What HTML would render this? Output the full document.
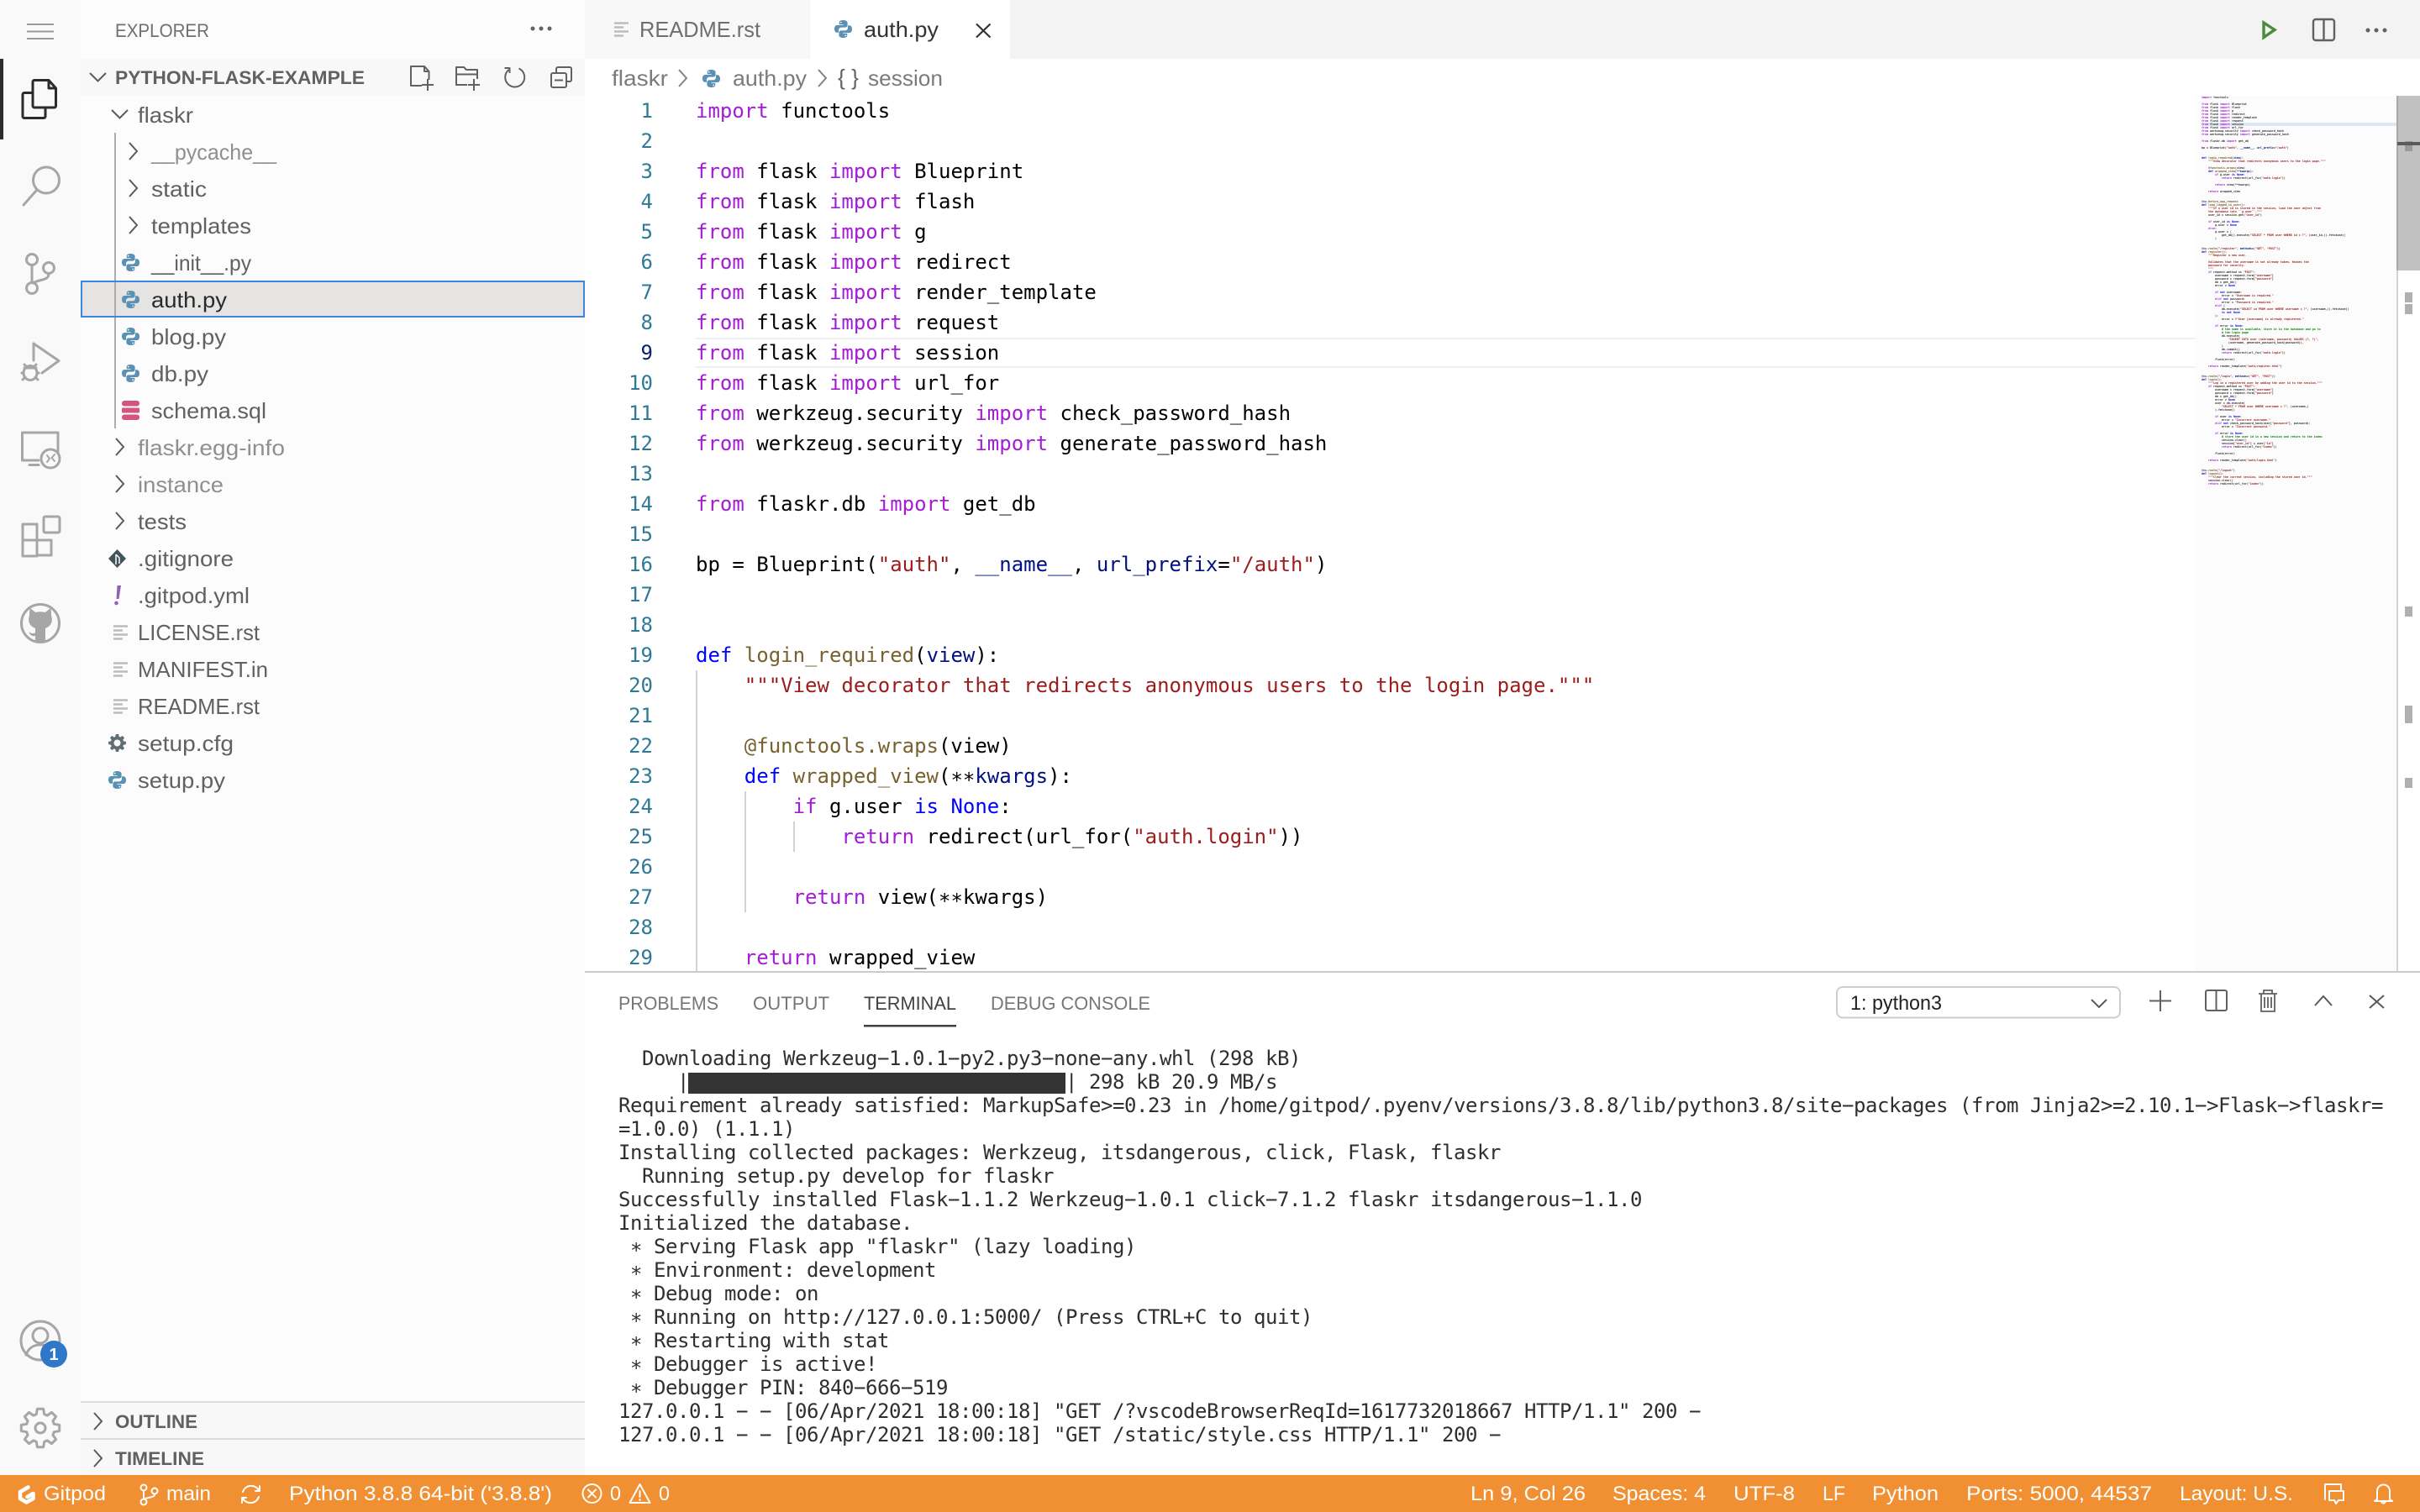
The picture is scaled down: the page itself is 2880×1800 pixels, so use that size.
<!DOCTYPE html>
<html lang="en">
<head>
<meta charset="utf-8">
<title>auth.py - python-flask-example - Gitpod Code</title>
<style>
html,body{margin:0;padding:0;width:2880px;height:1800px;overflow:hidden;background:#fff}
svg{display:block}
text{white-space:pre}
.u{font-family:"Liberation Sans",sans-serif;font-size:26px;fill:#616161}
.d{fill:#8f8f8f}
.h{font-family:"Liberation Sans",sans-serif;font-size:22px;fill:#6f6f6f}
.hb{font-family:"Liberation Sans",sans-serif;font-size:22px;font-weight:700;fill:#616161}
.st{font-family:"Liberation Sans",sans-serif;font-size:24px;fill:#fff}
.m{font-family:"DejaVu Sans Mono","Liberation Mono",monospace;font-size:24px;fill:#000}
.ln{font-family:"DejaVu Sans Mono","Liberation Mono",monospace;font-size:24px;fill:#2e7a96;text-anchor:end}
.t{font-family:"DejaVu Sans Mono","Liberation Mono",monospace;font-size:24px;fill:#2f2f2f;letter-spacing:-.449px}
.mm{font-family:"DejaVu Sans Mono","Liberation Mono",monospace;font-size:3.32px;font-weight:700;fill:#333}
.k{fill:#a41cd6}.b{fill:#0000ff}.f{fill:#78612e}.s{fill:#9c1c1c}.p{fill:#001080}.c{fill:#008000}
.ai{fill:none;stroke:#a6a6a6;stroke-width:3;stroke-linecap:round;stroke-linejoin:round}
.ic{fill:none;stroke:#616161;stroke-width:2;stroke-linejoin:round}
.ch{fill:none;stroke:#5a5a5a;stroke-width:2}
.w{fill:none;stroke:#fff;stroke-width:2;stroke-linejoin:round;stroke-linecap:round}
</style>
</head>
<body>
<svg xmlns="http://www.w3.org/2000/svg" width="2880" height="1800" viewBox="0 0 2880 1800">
<defs>
<symbol id="py" viewBox="0 0 21 21">
<g fill="#5b91b4">
<path fill-rule="evenodd" d="M10.4 0C6.5 0 5.7 1.5 5.7 3V5.2H10.6V6H3.2C1.3 6 0 7.7 0 10.4 0 13 1.2 14.8 3 14.8H5V12C5 10 6.6 8.6 8.4 8.6H13C14.5 8.6 15.6 7.4 15.6 6V3C15.6 1.2 13.6 0 10.4 0ZM7.7 1.7a.9.9 0 1 1 0 1.8.9.9 0 1 1 0-1.8Z"/>
<path fill-rule="evenodd" transform="rotate(180 10.5 10.5)" d="M10.4 0C6.5 0 5.7 1.5 5.7 3V5.2H10.6V6H3.2C1.3 6 0 7.7 0 10.4 0 13 1.2 14.8 3 14.8H5V12C5 10 6.6 8.6 8.4 8.6H13C14.5 8.6 15.6 7.4 15.6 6V3C15.6 1.2 13.6 0 10.4 0ZM7.7 1.7a.9.9 0 1 1 0 1.8.9.9 0 1 1 0-1.8Z"/>
</g>
</symbol>
<symbol id="fl" viewBox="0 0 17 18">
<path d="M0 1.5H17M0 6.5H11M0 11.5H17M0 16.5H11" stroke="#bcbcbc" stroke-width="2.4" fill="none"/>
</symbol>
<path id="gear" d="M-4.69-16.34L-3.6-22.72 3.6-22.72 4.69-16.34 8.24-14.87 13.52-18.61 18.61-13.52 14.87-8.24 16.34-4.69 22.72-3.6 22.72 3.6 16.34 4.69 14.87 8.24 18.61 13.52 13.52 18.61 8.24 14.87 4.69 16.34 3.6 22.72-3.6 22.72-4.69 16.34-8.24 14.87-13.52 18.61-18.61 13.52-14.87 8.24-16.34 4.69-22.72 3.6-22.72-3.6-16.34-4.69-14.87-8.24-18.61-13.52-13.52-18.61-8.24-14.87Z"/>
<path id="cr" d="M0 0L9 10 0 20" class="ch"/>
<path id="cd" d="M0 0L9.5 9.5 19 0" class="ch"/>
</defs>

<!-- backgrounds -->
<rect width="2880" height="1800" fill="#fff"/>
<rect x="0" y="0" width="96" height="1756" fill="#f9f9f9"/>
<rect x="96" y="0" width="600" height="1756" fill="#fcfcfc"/>
<rect x="96" y="70" width="600" height="44" fill="#f8f8f8"/>
<rect x="696" y="0" width="2184" height="70" fill="#f3f3f3"/>
<rect x="696" y="0" width="267" height="70" fill="#f8f8f8"/>
<rect x="964" y="0" width="238" height="70" fill="#fff"/>

<!-- activity bar -->
<path d="M32 29H64M32 37.5H64M32 46H64" stroke="#9a9a9a" stroke-width="2" fill="none"/>
<rect x="0" y="70" width="4" height="96" fill="#2c2c2c"/>
<g fill="none" stroke="#2b2b2b" stroke-width="3" stroke-linejoin="round">
<path d="M41 95.5H58L66.5 105V126a2 2 0 0 1-2 2H41a2 2 0 0 1-2-2V97.5a2 2 0 0 1 2-2Z"/>
<path d="M58 95.5V105H66.5"/>
<path d="M39 110.5H29a2 2 0 0 0-2 2V138.5a2 2 0 0 0 2 2H52a2 2 0 0 0 2-2V128"/>
</g>
<g class="ai">
<circle cx="55" cy="214.5" r="15.5"/><path d="M44 226L28 244"/>
<circle cx="38" cy="309" r="6.5"/><circle cx="58" cy="319" r="6.5"/><circle cx="38" cy="343" r="6.5"/>
<path d="M38 316V336M58 326C58 334 48 332 39 337"/>
<path d="M40 409V429M40 409L70 429.5 50 444"/>
<ellipse cx="36" cy="444" rx="8" ry="8.5"/>
<path d="M29 434L32 437M43 434L40 437M26 444H28M44 444H46M27 452L30 449M45 452L42 449M29 438H43"/>
<path d="M69 539V515H26.5V548H46M35 553.5H46"/>
<circle cx="60" cy="546" r="11"/>
<path d="M56 542L59 546 56 550M65 541L61.500 545 65 549" stroke-width="2"/>
<path d="M27 624H44V662H27ZM27 643H61V661H44"/>
<rect x="52" y="615" width="19" height="19" rx="2"/>
<circle cx="48" cy="742" r="22.500"/>
<circle cx="48" cy="1596" r="23"/>
<circle cx="48" cy="1590" r="9"/>
<path d="M31 1613C34 1604 41 1601 48 1601S62 1604 65 1613"/>
<use href="#gear" transform="translate(48 1700)"/>
<circle cx="48" cy="1700" r="6"/>
</g>
<path fill="#a6a6a6" d="M36 724L42 729C46 728 50 728 54 729L60 724C61 727 61 730 61 733 63 738 62 745 54 748V764H42V757C38 758 36 756 34 752 37 754 39 755 42 753V748C34 745 33 738 35 733 35 730 35 727 36 724Z"/>
<circle cx="64" cy="1612" r="16" fill="#2f77c9"/>
<text x="64" y="1619" text-anchor="middle" style="font:700 20px 'Liberation Sans',sans-serif;fill:#fff">1</text>

<!-- sidebar header -->
<text class="h" x="137" y="44" textLength="112" lengthAdjust="spacingAndGlyphs">EXPLORER</text>
<g fill="#616161"><circle cx="634" cy="34" r="2.500"/><circle cx="644" cy="34" r="2.500"/><circle cx="654" cy="34" r="2.500"/></g>
<use href="#cd" x="107" y="87"/>
<text class="hb" x="137" y="100" textLength="297" lengthAdjust="spacingAndGlyphs">PYTHON-FLASK-EXAMPLE</text>
<g class="ic">
<path d="M502 102H489V79H505L510.500 85V95M505 79V85H510.500"/><path d="M509 94V108M502 101H516"/>
<path d="M556 101H543V80H552L555 83H568V94M543 88.500H568"/><path d="M564 94V108M557 101H571"/>
<path d="M605.500 83A11.500 11.500 0 1 0 617.500 81.500M600.500 81H606.500V87"/>
<path d="M662 87V82a2 2 0 0 1 2-2H678a2 2 0 0 1 2 2V95a2 2 0 0 1-2 2H674"/>
<rect x="656" y="87" width="18" height="17" rx="2"/><path d="M660 95.500H670"/>
</g>

<!-- tree -->
<use href="#cd" x="133" y="131"/>
<text class="u" x="164" y="146" textLength="66" lengthAdjust="spacingAndGlyphs">flaskr</text>
<rect x="136" y="158" width="2" height="352" fill="#adadad"/>
<use href="#cr" x="154" y="170"/>
<text class="u d" x="180" y="190" textLength="149" lengthAdjust="spacingAndGlyphs">__pycache__</text>
<use href="#cr" x="154" y="214"/>
<text class="u" x="180" y="234" textLength="66" lengthAdjust="spacingAndGlyphs">static</text>
<use href="#cr" x="154" y="258"/>
<text class="u" x="180" y="278" textLength="119" lengthAdjust="spacingAndGlyphs">templates</text>
<use href="#py" x="145" y="302" width="21" height="21"/>
<text class="u" x="180" y="322" textLength="119" lengthAdjust="spacingAndGlyphs">__init__.py</text>
<rect x="97" y="335" width="598" height="42" fill="#e5e4e3" stroke="#3b87e5" stroke-width="2"/>
<rect x="136" y="336" width="2" height="40" fill="#adadad"/>
<use href="#py" x="145" y="346" width="21" height="21"/>
<text class="u" x="180" y="366" textLength="90" lengthAdjust="spacingAndGlyphs" style="fill:#2a2a2a">auth.py</text>
<use href="#py" x="145" y="390" width="21" height="21"/>
<text class="u" x="180" y="410" textLength="89" lengthAdjust="spacingAndGlyphs">blog.py</text>
<use href="#py" x="145" y="434" width="21" height="21"/>
<text class="u" x="180" y="454" textLength="68" lengthAdjust="spacingAndGlyphs">db.py</text>
<g fill="#d1557c"><rect x="145" y="477" width="21" height="6.500" rx="3"/><rect x="145" y="485.500" width="21" height="6" rx="1"/><rect x="145" y="493.500" width="21" height="6.500" rx="3"/></g>
<text class="u" x="180" y="498" textLength="137" lengthAdjust="spacingAndGlyphs">schema.sql</text>
<use href="#cr" x="138" y="522"/>
<text class="u d" x="164" y="542" textLength="175" lengthAdjust="spacingAndGlyphs">flaskr.egg-info</text>
<use href="#cr" x="138" y="566"/>
<text class="u d" x="164" y="586" textLength="102" lengthAdjust="spacingAndGlyphs">instance</text>
<use href="#cr" x="138" y="610"/>
<text class="u" x="164" y="630" textLength="58" lengthAdjust="spacingAndGlyphs">tests</text>
<path d="M139.500 654L150 665 139.500 676 129 665Z" fill="#41535b"/>
<path d="M138 660L142 664V671M138 660V672" stroke="#fcfcfc" stroke-width="1.500" fill="none"/>
<text class="u" x="164" y="674" textLength="114" lengthAdjust="spacingAndGlyphs">.gitignore</text>
<path d="M139.500 697H144L141.500 713H138.500Z" fill="#8f62b5"/><circle cx="138.500" cy="718" r="2.300" fill="#8f62b5"/>
<text class="u" x="164" y="718" textLength="133" lengthAdjust="spacingAndGlyphs">.gitpod.yml</text>
<use href="#fl" x="135" y="744" width="17" height="18"/>
<text class="u" x="164" y="762" textLength="145" lengthAdjust="spacingAndGlyphs">LICENSE.rst</text>
<use href="#fl" x="135" y="788" width="17" height="18"/>
<text class="u" x="164" y="806" textLength="155" lengthAdjust="spacingAndGlyphs">MANIFEST.in</text>
<use href="#fl" x="135" y="832" width="17" height="18"/>
<text class="u" x="164" y="850" textLength="145" lengthAdjust="spacingAndGlyphs">README.rst</text>
<use href="#gear" transform="translate(139.500 884.500) scale(.46)" fill="#5f6d76"/>
<circle cx="139.500" cy="884.500" r="4" fill="#fcfcfc"/>
<text class="u" x="164" y="894" textLength="114" lengthAdjust="spacingAndGlyphs">setup.cfg</text>
<use href="#py" x="129" y="918" width="21" height="21"/>
<text class="u" x="164" y="938" textLength="104" lengthAdjust="spacingAndGlyphs">setup.py</text>

<!-- outline / timeline -->
<rect x="96" y="1670" width="600" height="86" fill="#f8f8f8"/>
<rect x="96" y="1668" width="600" height="2" fill="#dcdcdc"/>
<rect x="96" y="1712" width="600" height="2" fill="#dcdcdc"/>
<use href="#cr" x="112" y="1682"/>
<text class="hb" x="137" y="1700" textLength="98" lengthAdjust="spacingAndGlyphs">OUTLINE</text>
<use href="#cr" x="112" y="1726"/>
<text class="hb" x="137" y="1744" textLength="106" lengthAdjust="spacingAndGlyphs">TIMELINE</text>

<!-- tabs -->
<use href="#fl" x="731" y="26" width="17" height="18"/>
<text class="u" x="761" y="44" textLength="144" lengthAdjust="spacingAndGlyphs" style="fill:#6f6f6f">README.rst</text>
<use href="#py" x="993" y="24" width="21" height="21"/>
<text class="u" x="1028" y="44" textLength="89" lengthAdjust="spacingAndGlyphs" style="fill:#333">auth.py</text>
<path d="M1162 28.500L1178.500 44.500M1178.500 28.500L1162 44.500" stroke="#333" stroke-width="2.200" fill="none"/>
<path d="M2694 27V44.500L2707 35.500Z" fill="none" stroke="#4b8b3b" stroke-width="3.400"/>
<rect x="2753" y="23" width="25" height="25" rx="3" fill="none" stroke="#616161" stroke-width="2.400"/>
<path d="M2765.500 23V48" stroke="#616161" stroke-width="2.400"/>
<g fill="#616161"><circle cx="2818" cy="36" r="2.500"/><circle cx="2828" cy="36" r="2.500"/><circle cx="2838" cy="36" r="2.500"/></g>

<!-- breadcrumbs -->
<text class="u" x="728" y="102" textLength="67" lengthAdjust="spacingAndGlyphs" style="fill:#7b7b7b">flaskr</text>
<use href="#cr" x="808" y="83" style="opacity:.75"/>
<use href="#py" x="836" y="83" width="21" height="21"/>
<text class="u" x="872" y="102" textLength="88" lengthAdjust="spacingAndGlyphs" style="fill:#7b7b7b">auth.py</text>
<use href="#cr" x="974" y="83" style="opacity:.75"/>
<text class="u" x="997" y="101" textLength="25" lengthAdjust="spacingAndGlyphs" style="fill:#616161">{ }</text>
<text class="u" x="1033" y="102" textLength="89" lengthAdjust="spacingAndGlyphs" style="fill:#7b7b7b">session</text>

<!-- current line -->
<rect x="828" y="402" width="1784" height="2" fill="#efefef"/>
<rect x="828" y="436" width="1784" height="2" fill="#efefef"/>

<!-- minimap + scrollbar -->
<rect x="2612" y="114" width="240" height="1043" fill="#fcfcfc"/>
<rect x="2620" y="146" width="232" height="4" fill="#dbe7f7"/>
<rect x="2852" y="114" width="2" height="1043" fill="#d3d3d3"/>
<rect x="2854" y="114" width="26" height="208" fill="#c1c1c1"/>
<rect x="2852" y="114" width="2" height="208" fill="#a9a9a9"/>
<rect x="2862" y="168" width="9" height="12" fill="#999"/>
<rect x="2853" y="169" width="27" height="4" fill="#5a5a5a"/>
<g fill="#b0b0b0">
<rect x="2862" y="348" width="9" height="12"/><rect x="2862" y="362" width="9" height="12"/>
<rect x="2862" y="722" width="9" height="12"/><rect x="2862" y="840" width="9" height="21"/><rect x="2862" y="926" width="9" height="12"/>
</g>

<!-- indent guides -->
<g fill="#d3d3d3">
<rect x="828" y="798" width="2" height="359"/>
<rect x="886" y="942" width="2" height="144"/>
<rect x="944" y="978" width="2" height="36"/>
</g>

<!-- line numbers -->
<text class="ln" x="777" y="140">1</text>
<text class="ln" x="777" y="176">2</text>
<text class="ln" x="777" y="212">3</text>
<text class="ln" x="777" y="248">4</text>
<text class="ln" x="777" y="284">5</text>
<text class="ln" x="777" y="320">6</text>
<text class="ln" x="777" y="356">7</text>
<text class="ln" x="777" y="392">8</text>
<text class="ln" x="777" y="428" style="fill:#0b216f">9</text>
<text class="ln" x="777" y="464">10</text>
<text class="ln" x="777" y="500">11</text>
<text class="ln" x="777" y="536">12</text>
<text class="ln" x="777" y="572">13</text>
<text class="ln" x="777" y="608">14</text>
<text class="ln" x="777" y="644">15</text>
<text class="ln" x="777" y="680">16</text>
<text class="ln" x="777" y="716">17</text>
<text class="ln" x="777" y="752">18</text>
<text class="ln" x="777" y="788">19</text>
<text class="ln" x="777" y="824">20</text>
<text class="ln" x="777" y="860">21</text>
<text class="ln" x="777" y="896">22</text>
<text class="ln" x="777" y="932">23</text>
<text class="ln" x="777" y="968">24</text>
<text class="ln" x="777" y="1004">25</text>
<text class="ln" x="777" y="1040">26</text>
<text class="ln" x="777" y="1076">27</text>
<text class="ln" x="777" y="1112">28</text>
<text class="ln" x="777" y="1148">29</text>

<!-- code -->
<text class="m" x="828" y="140"><tspan class="k">import</tspan> functools</text>
<text class="m" x="828" y="212"><tspan class="k">from</tspan> flask <tspan class="k">import</tspan> Blueprint</text>
<text class="m" x="828" y="248"><tspan class="k">from</tspan> flask <tspan class="k">import</tspan> flash</text>
<text class="m" x="828" y="284"><tspan class="k">from</tspan> flask <tspan class="k">import</tspan> g</text>
<text class="m" x="828" y="320"><tspan class="k">from</tspan> flask <tspan class="k">import</tspan> redirect</text>
<text class="m" x="828" y="356"><tspan class="k">from</tspan> flask <tspan class="k">import</tspan> render_template</text>
<text class="m" x="828" y="392"><tspan class="k">from</tspan> flask <tspan class="k">import</tspan> request</text>
<text class="m" x="828" y="428"><tspan class="k">from</tspan> flask <tspan class="k">import</tspan> session</text>
<text class="m" x="828" y="464"><tspan class="k">from</tspan> flask <tspan class="k">import</tspan> url_for</text>
<text class="m" x="828" y="500"><tspan class="k">from</tspan> werkzeug.security <tspan class="k">import</tspan> check_password_hash</text>
<text class="m" x="828" y="536"><tspan class="k">from</tspan> werkzeug.security <tspan class="k">import</tspan> generate_password_hash</text>
<text class="m" x="828" y="608"><tspan class="k">from</tspan> flaskr.db <tspan class="k">import</tspan> get_db</text>
<text class="m" x="828" y="680">bp = Blueprint(<tspan class="s">"auth"</tspan>, <tspan class="p">__name__</tspan>, <tspan class="p">url_prefix</tspan>=<tspan class="s">"/auth"</tspan>)</text>
<text class="m" x="828" y="788"><tspan class="b">def</tspan> <tspan class="f">login_required</tspan>(<tspan class="p">view</tspan>):</text>
<text class="m" x="828" y="824">    <tspan class="s">"""View decorator that redirects anonymous users to the login page."""</tspan></text>
<text class="m" x="828" y="896">    <tspan class="f">@functools.wraps</tspan>(view)</text>
<text class="m" x="828" y="932">    <tspan class="b">def</tspan> <tspan class="f">wrapped_view</tspan>(∗∗<tspan class="p">kwargs</tspan>):</text>
<text class="m" x="828" y="968">        <tspan class="k">if</tspan> g.user <tspan class="b">is</tspan> <tspan class="b">None</tspan>:</text>
<text class="m" x="828" y="1004">            <tspan class="k">return</tspan> redirect(url_for(<tspan class="s">"auth.login"</tspan>))</text>
<text class="m" x="828" y="1076">        <tspan class="k">return</tspan> view(∗∗kwargs)</text>
<text class="m" x="828" y="1148">    <tspan class="k">return</tspan> wrapped_view</text>

<!-- minimap text -->
<g transform="translate(0 -1)">
<text class="mm" x="2620" y="118"><tspan class="k">import</tspan> functools</text>
<text class="mm" x="2620" y="126"><tspan class="k">from</tspan> flask <tspan class="k">import</tspan> Blueprint</text>
<text class="mm" x="2620" y="130"><tspan class="k">from</tspan> flask <tspan class="k">import</tspan> flash</text>
<text class="mm" x="2620" y="134"><tspan class="k">from</tspan> flask <tspan class="k">import</tspan> g</text>
<text class="mm" x="2620" y="138"><tspan class="k">from</tspan> flask <tspan class="k">import</tspan> redirect</text>
<text class="mm" x="2620" y="142"><tspan class="k">from</tspan> flask <tspan class="k">import</tspan> render_template</text>
<text class="mm" x="2620" y="146"><tspan class="k">from</tspan> flask <tspan class="k">import</tspan> request</text>
<text class="mm" x="2620" y="150"><tspan class="k">from</tspan> flask <tspan class="k">import</tspan> session</text>
<text class="mm" x="2620" y="154"><tspan class="k">from</tspan> flask <tspan class="k">import</tspan> url_for</text>
<text class="mm" x="2620" y="158"><tspan class="k">from</tspan> werkzeug.security <tspan class="k">import</tspan> check_password_hash</text>
<text class="mm" x="2620" y="162"><tspan class="k">from</tspan> werkzeug.security <tspan class="k">import</tspan> generate_password_hash</text>
<text class="mm" x="2620" y="170"><tspan class="k">from</tspan> flaskr.db <tspan class="k">import</tspan> get_db</text>
<text class="mm" x="2620" y="178">bp = Blueprint(<tspan class="s">"auth"</tspan>, <tspan class="p">__name__</tspan>, <tspan class="p">url_prefix</tspan>=<tspan class="s">"/auth"</tspan>)</text>
<text class="mm" x="2620" y="190"><tspan class="b">def</tspan> <tspan class="f">login_required</tspan>(<tspan class="p">view</tspan>):</text>
<text class="mm" x="2620" y="194">    <tspan class="s">"""View decorator that redirects anonymous users to the login page."""</tspan></text>
<text class="mm" x="2620" y="202">    <tspan class="f">@functools.wraps</tspan>(view)</text>
<text class="mm" x="2620" y="206">    <tspan class="b">def</tspan> <tspan class="f">wrapped_view</tspan>(**<tspan class="p">kwargs</tspan>):</text>
<text class="mm" x="2620" y="210">        <tspan class="k">if</tspan> g.user <tspan class="b">is</tspan> <tspan class="b">None</tspan>:</text>
<text class="mm" x="2620" y="214">            <tspan class="k">return</tspan> redirect(url_for(<tspan class="s">"auth.login"</tspan>))</text>
<text class="mm" x="2620" y="222">        <tspan class="k">return</tspan> view(**kwargs)</text>
<text class="mm" x="2620" y="230">    <tspan class="k">return</tspan> wrapped_view</text>
<text class="mm" x="2620" y="242"><tspan class="f">@bp.before_app_request</tspan></text>
<text class="mm" x="2620" y="246"><tspan class="b">def</tspan> <tspan class="f">load_logged_in_user</tspan>():</text>
<text class="mm" x="2620" y="250">    <tspan class="s">"""If a user id is stored in the session, load the user object from</tspan></text>
<text class="mm" x="2620" y="254">    <tspan class="s">the database into ``g.user``."""</tspan></text>
<text class="mm" x="2620" y="258">    user_id = session.get(<tspan class="s">"user_id"</tspan>)</text>
<text class="mm" x="2620" y="266">    <tspan class="k">if</tspan> user_id <tspan class="b">is</tspan> <tspan class="b">None</tspan>:</text>
<text class="mm" x="2620" y="270">        g.user = <tspan class="b">None</tspan></text>
<text class="mm" x="2620" y="274">    <tspan class="k">else</tspan>:</text>
<text class="mm" x="2620" y="278">        g.user = (</text>
<text class="mm" x="2620" y="282">            get_db().execute(<tspan class="s">"SELECT * FROM user WHERE id = ?"</tspan>, (user_id,)).fetchone()</text>
<text class="mm" x="2620" y="286">        )</text>
<text class="mm" x="2620" y="298"><tspan class="f">@bp.route</tspan>(<tspan class="s">"/register"</tspan>, <tspan class="p">methods</tspan>=(<tspan class="s">"GET"</tspan>, <tspan class="s">"POST"</tspan>))</text>
<text class="mm" x="2620" y="302"><tspan class="b">def</tspan> <tspan class="f">register</tspan>():</text>
<text class="mm" x="2620" y="306">    <tspan class="s">"""Register a new user.</tspan></text>
<text class="mm" x="2620" y="314">    <tspan class="s">Validates that the username is not already taken. Hashes the</tspan></text>
<text class="mm" x="2620" y="318">    <tspan class="s">password for security.</tspan></text>
<text class="mm" x="2620" y="322">    <tspan class="s">"""</tspan></text>
<text class="mm" x="2620" y="326">    <tspan class="k">if</tspan> request.method == <tspan class="s">"POST"</tspan>:</text>
<text class="mm" x="2620" y="330">        username = request.form[<tspan class="s">"username"</tspan>]</text>
<text class="mm" x="2620" y="334">        password = request.form[<tspan class="s">"password"</tspan>]</text>
<text class="mm" x="2620" y="338">        db = get_db()</text>
<text class="mm" x="2620" y="342">        error = <tspan class="b">None</tspan></text>
<text class="mm" x="2620" y="350">        <tspan class="k">if</tspan> <tspan class="b">not</tspan> username:</text>
<text class="mm" x="2620" y="354">            error = <tspan class="s">"Username is required."</tspan></text>
<text class="mm" x="2620" y="358">        <tspan class="k">elif</tspan> <tspan class="b">not</tspan> password:</text>
<text class="mm" x="2620" y="362">            error = <tspan class="s">"Password is required."</tspan></text>
<text class="mm" x="2620" y="366">        <tspan class="k">elif</tspan> (</text>
<text class="mm" x="2620" y="370">            db.execute(<tspan class="s">"SELECT id FROM user WHERE username = ?"</tspan>, (username,)).fetchone()</text>
<text class="mm" x="2620" y="374">            <tspan class="b">is not None</tspan></text>
<text class="mm" x="2620" y="378">        ):</text>
<text class="mm" x="2620" y="382">            error = <tspan class="s">f"User {username} is already registered."</tspan></text>
<text class="mm" x="2620" y="390">        <tspan class="k">if</tspan> error <tspan class="b">is</tspan> <tspan class="b">None</tspan>:</text>
<text class="mm" x="2620" y="394">            <tspan class="c"># the name is available, store it in the database and go to</tspan></text>
<text class="mm" x="2620" y="398">            <tspan class="c"># the login page</tspan></text>
<text class="mm" x="2620" y="402">            db.execute(</text>
<text class="mm" x="2620" y="406">                <tspan class="s">"INSERT INTO user (username, password) VALUES (?, ?)"</tspan>,</text>
<text class="mm" x="2620" y="410">                (username, generate_password_hash(password)),</text>
<text class="mm" x="2620" y="414">            )</text>
<text class="mm" x="2620" y="418">            db.commit()</text>
<text class="mm" x="2620" y="422">            <tspan class="k">return</tspan> redirect(url_for(<tspan class="s">"auth.login"</tspan>))</text>
<text class="mm" x="2620" y="430">        flash(error)</text>
<text class="mm" x="2620" y="438">    <tspan class="k">return</tspan> render_template(<tspan class="s">"auth/register.html"</tspan>)</text>
<text class="mm" x="2620" y="450"><tspan class="f">@bp.route</tspan>(<tspan class="s">"/login"</tspan>, <tspan class="p">methods</tspan>=(<tspan class="s">"GET"</tspan>, <tspan class="s">"POST"</tspan>))</text>
<text class="mm" x="2620" y="454"><tspan class="b">def</tspan> <tspan class="f">login</tspan>():</text>
<text class="mm" x="2620" y="458">    <tspan class="s">"""Log in a registered user by adding the user id to the session."""</tspan></text>
<text class="mm" x="2620" y="462">    <tspan class="k">if</tspan> request.method == <tspan class="s">"POST"</tspan>:</text>
<text class="mm" x="2620" y="466">        username = request.form[<tspan class="s">"username"</tspan>]</text>
<text class="mm" x="2620" y="470">        password = request.form[<tspan class="s">"password"</tspan>]</text>
<text class="mm" x="2620" y="474">        db = get_db()</text>
<text class="mm" x="2620" y="478">        error = <tspan class="b">None</tspan></text>
<text class="mm" x="2620" y="482">        user = db.execute(</text>
<text class="mm" x="2620" y="486">            <tspan class="s">"SELECT * FROM user WHERE username = ?"</tspan>, (username,)</text>
<text class="mm" x="2620" y="490">        ).fetchone()</text>
<text class="mm" x="2620" y="498">        <tspan class="k">if</tspan> user <tspan class="b">is</tspan> <tspan class="b">None</tspan>:</text>
<text class="mm" x="2620" y="502">            error = <tspan class="s">"Incorrect username."</tspan></text>
<text class="mm" x="2620" y="506">        <tspan class="k">elif</tspan> <tspan class="b">not</tspan> check_password_hash(user[<tspan class="s">"password"</tspan>], password):</text>
<text class="mm" x="2620" y="510">            error = <tspan class="s">"Incorrect password."</tspan></text>
<text class="mm" x="2620" y="518">        <tspan class="k">if</tspan> error <tspan class="b">is</tspan> <tspan class="b">None</tspan>:</text>
<text class="mm" x="2620" y="522">            <tspan class="c"># store the user id in a new session and return to the index</tspan></text>
<text class="mm" x="2620" y="526">            session.clear()</text>
<text class="mm" x="2620" y="530">            session[<tspan class="s">"user_id"</tspan>] = user[<tspan class="s">"id"</tspan>]</text>
<text class="mm" x="2620" y="534">            <tspan class="k">return</tspan> redirect(url_for(<tspan class="s">"index"</tspan>))</text>
<text class="mm" x="2620" y="542">        flash(error)</text>
<text class="mm" x="2620" y="550">    <tspan class="k">return</tspan> render_template(<tspan class="s">"auth/login.html"</tspan>)</text>
<text class="mm" x="2620" y="562"><tspan class="f">@bp.route</tspan>(<tspan class="s">"/logout"</tspan>)</text>
<text class="mm" x="2620" y="566"><tspan class="b">def</tspan> <tspan class="f">logout</tspan>():</text>
<text class="mm" x="2620" y="570">    <tspan class="s">"""Clear the current session, including the stored user id."""</tspan></text>
<text class="mm" x="2620" y="574">    session.clear()</text>
<text class="mm" x="2620" y="578">    <tspan class="k">return</tspan> redirect(url_for(<tspan class="s">"index"</tspan>))</text>
</g>

<!-- panel -->
<rect x="696" y="1158" width="2184" height="598" fill="#fff"/>
<rect x="696" y="1156" width="2184" height="2" fill="#cccccc"/>
<text class="h" x="736" y="1202" textLength="119" lengthAdjust="spacingAndGlyphs" style="fill:#767676">PROBLEMS</text>
<text class="h" x="896" y="1202" textLength="91" lengthAdjust="spacingAndGlyphs" style="fill:#767676">OUTPUT</text>
<text class="h" x="1028" y="1202" textLength="110" lengthAdjust="spacingAndGlyphs" style="fill:#424242">TERMINAL</text>
<rect x="1028" y="1220" width="110" height="2.500" fill="#424242"/>
<text class="h" x="1179" y="1202" textLength="190" lengthAdjust="spacingAndGlyphs" style="fill:#767676">DEBUG CONSOLE</text>
<rect x="2186" y="1175" width="337" height="36.500" rx="7" fill="#fff" stroke="#cecece" stroke-width="2"/>
<text x="2202" y="1202" textLength="109" lengthAdjust="spacingAndGlyphs" style="font:24px 'Liberation Sans',sans-serif;fill:#222">1: python3</text>
<path d="M2489 1190L2498 1199 2507 1190" class="ch"/>
<path d="M2571 1179V1204M2558 1191.500H2584" stroke="#616161" stroke-width="2" fill="none"/>
<rect x="2625" y="1179" width="25" height="24" rx="2" class="ic"/><path d="M2637.500 1179V1203" class="ic"/>
<path d="M2688 1183H2710M2694 1183V1179H2704V1183M2691 1183V1204H2707V1183M2695 1187V1200M2699 1187V1200M2703 1187V1200" fill="none" stroke="#616161" stroke-width="1.800"/>
<path d="M2755 1197L2765 1186 2775 1197" class="ch"/>
<path d="M2820 1185L2837 1200M2837 1185L2820 1200" stroke="#5a5a5a" stroke-width="2" fill="none"/>

<!-- terminal -->
<text class="t" x="736" y="1268">  Downloading Werkzeug−1.0.1−py2.py3−none−any.whl (298 kB)</text>
<text class="t" x="736" y="1296">     |                                | 298 kB 20.9 MB/s</text>
<rect x="819" y="1277" width="449" height="25" fill="#333"/>
<text class="t" x="736" y="1324">Requirement already satisfied: MarkupSafe>=0.23 in /home/gitpod/.pyenv/versions/3.8.8/lib/python3.8/site−packages (from Jinja2>=2.10.1−>Flask−>flaskr=</text>
<text class="t" x="736" y="1352">=1.0.0) (1.1.1)</text>
<text class="t" x="736" y="1380">Installing collected packages: Werkzeug, itsdangerous, click, Flask, flaskr</text>
<text class="t" x="736" y="1408">  Running setup.py develop for flaskr</text>
<text class="t" x="736" y="1436">Successfully installed Flask−1.1.2 Werkzeug−1.0.1 click−7.1.2 flaskr itsdangerous−1.1.0</text>
<text class="t" x="736" y="1464">Initialized the database.</text>
<text class="t" x="736" y="1492"> ∗ Serving Flask app "flaskr" (lazy loading)</text>
<text class="t" x="736" y="1520"> ∗ Environment: development</text>
<text class="t" x="736" y="1548"> ∗ Debug mode: on</text>
<text class="t" x="736" y="1576"> ∗ Running on http://127.0.0.1:5000/ (Press CTRL+C to quit)</text>
<text class="t" x="736" y="1604"> ∗ Restarting with stat</text>
<text class="t" x="736" y="1632"> ∗ Debugger is active!</text>
<text class="t" x="736" y="1660"> ∗ Debugger PIN: 840−666−519</text>
<text class="t" x="736" y="1688">127.0.0.1 − − [06/Apr/2021 18:00:18] "GET /?vscodeBrowserReqId=1617732018667 HTTP/1.1" 200 −</text>
<text class="t" x="736" y="1716">127.0.0.1 − − [06/Apr/2021 18:00:18] "GET /static/style.css HTTP/1.1" 200 −</text>

<!-- status bar -->
<rect x="0" y="1756" width="2880" height="44" fill="#f19033"/>
<path d="M33.500 1770.500L24 1776V1784L31.500 1788.500 39.500 1784V1778L32.500 1782" fill="none" stroke="#fff" stroke-width="4.600" stroke-linejoin="round" stroke-linecap="round"/>
<text class="st" x="52" y="1786" textLength="74" lengthAdjust="spacingAndGlyphs">Gitpod</text>
<g class="w">
<circle cx="171" cy="1771" r="3.500"/><circle cx="184" cy="1775" r="3.500"/><circle cx="171" cy="1788" r="3.500"/>
<path d="M171 1775V1784M184 1779C184 1783 176 1782 171 1785"/>
</g>
<text class="st" x="198" y="1786" textLength="53" lengthAdjust="spacingAndGlyphs">main</text>
<g class="w">
<path d="M289 1776A10.500 10.500 0 0 1 308 1774M308 1782A10.500 10.500 0 0 1 289 1784M304 1775H309V1769M293 1783H288V1789"/>
</g>
<text class="st" x="344" y="1786" textLength="313" lengthAdjust="spacingAndGlyphs">Python 3.8.8 64-bit ('3.8.8')</text>
<g class="w">
<circle cx="704.500" cy="1778" r="11"/><path d="M700 1773.500L709 1782.500M709 1773.500L700 1782.500"/>
<path d="M761.500 1767L773.500 1789H749.500ZM761.500 1775V1782M761.500 1785V1786"/>
</g>
<text class="st" x="726" y="1786" textLength="13" lengthAdjust="spacingAndGlyphs">0</text>
<text class="st" x="784" y="1786" textLength="13" lengthAdjust="spacingAndGlyphs">0</text>
<text class="st" x="1750" y="1786" textLength="137" lengthAdjust="spacingAndGlyphs">Ln 9, Col 26</text>
<text class="st" x="1919" y="1786" textLength="111" lengthAdjust="spacingAndGlyphs">Spaces: 4</text>
<text class="st" x="2063" y="1786" textLength="73" lengthAdjust="spacingAndGlyphs">UTF-8</text>
<text class="st" x="2169" y="1786" textLength="27" lengthAdjust="spacingAndGlyphs">LF</text>
<text class="st" x="2228" y="1786" textLength="79" lengthAdjust="spacingAndGlyphs">Python</text>
<text class="st" x="2340" y="1786" textLength="221" lengthAdjust="spacingAndGlyphs">Ports: 5000, 44537</text>
<text class="st" x="2594" y="1786" textLength="135" lengthAdjust="spacingAndGlyphs">Layout: U.S.</text>
<g class="w">
<path d="M2767 1785V1767H2786V1773M2772 1775H2789V1786H2783L2780 1790 2778 1786H2772Z"/>
<path d="M2829 1785V1775A7.500 7.500 0 0 1 2844 1775V1785L2847 1787H2826ZM2834 1787A2.500 2.500 0 0 0 2839 1787"/>
</g>
</svg>
</body>
</html>
